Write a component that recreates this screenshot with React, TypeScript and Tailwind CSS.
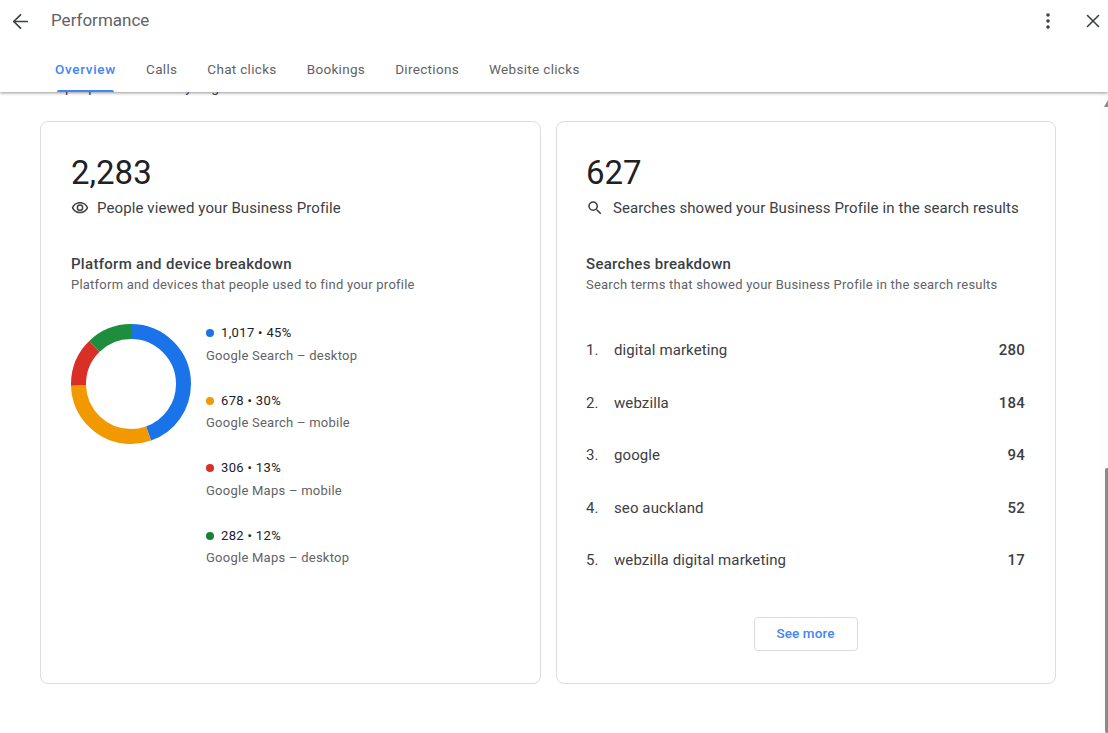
import React from "react";
import { ArrowLeft, X } from "lucide-react";

const tabs = ["Overview", "Calls", "Chat clicks", "Bookings", "Directions", "Website clicks"];

const platforms = [
  { value: "1,017 • 45%", label: "Google Search – desktop", dot: "bg-[#1a73e8]" },
  { value: "678 • 30%", label: "Google Search – mobile", dot: "bg-[#f29900]" },
  { value: "306 • 13%", label: "Google Maps – mobile", dot: "bg-[#d93025]" },
  { value: "282 • 12%", label: "Google Maps – desktop", dot: "bg-[#188038]" },
];

const terms = [
  { term: "digital marketing", count: 280 },
  { term: "webzilla", count: 184 },
  { term: "google", count: 94 },
  { term: "seo auckland", count: 52 },
  { term: "webzilla digital marketing", count: 17 },
];

const segments = [
  { color: "#1a73e8", share: 0.445 },
  { color: "#f29900", share: 0.299 },
  { color: "#d93025", share: 0.132 },
  { color: "#1e8e3e", share: 0.124 },
];

const Donut = () => {
  const radius = 52.5;
  const circumference = 2 * Math.PI * radius;
  let offset = 0;
  return (
    <svg width="120" height="120" viewBox="0 0 120 120" className="shrink-0 -rotate-90">
      {segments.map((s) => {
        const el = (
          <circle
            key={s.color}
            cx="60"
            cy="60"
            r={radius}
            fill="none"
            stroke={s.color}
            strokeWidth="15"
            strokeDasharray={`${s.share * circumference} ${circumference}`}
            strokeDashoffset={-offset * circumference}
          />
        );
        offset += s.share;
        return el;
      })}
    </svg>
  );
};

const EyeIcon = () => (
  <svg width="18" height="18" viewBox="0 0 24 24" fill="#3c4043" className="shrink-0">
    <path d="M12 6a9.77 9.77 0 0 1 8.82 5.5C19.17 14.87 15.79 17 12 17s-7.17-2.13-8.82-5.5A9.77 9.77 0 0 1 12 6m0-2C7 4 2.73 7.11 1 11.5 2.73 15.89 7 19 12 19s9.27-3.11 11-7.5C21.27 7.11 17 4 12 4zm0 5a2.5 2.5 0 1 1 0 5 2.5 2.5 0 0 1 0-5m0-2a4.5 4.5 0 1 0 0 9 4.5 4.5 0 0 0 0-9z" />
  </svg>
);

const SearchIcon = () => (
  <svg width="18" height="18" viewBox="0 0 24 24" fill="#3c4043" className="shrink-0">
    <path d="M15.5 14h-.79l-.28-.27A6.471 6.471 0 0 0 16 9.5 6.5 6.5 0 1 0 9.5 16c1.61 0 3.09-.59 4.23-1.57l.27.28v.79l5 4.99L20.49 19l-4.99-5zm-6 0C7.01 14 5 11.99 5 9.5S7.01 5 9.5 5 14 7.01 14 9.5 11.99 14 9.5 14z" />
  </svg>
);

const MoreIcon = () => (
  <svg width="24" height="24" viewBox="0 0 24 24" fill="#3c4043">
    <circle cx="12" cy="6" r="1.8" />
    <circle cx="12" cy="12" r="1.8" />
    <circle cx="12" cy="18" r="1.8" />
  </svg>
);

export default function App() {
  return (
    <div className="relative flex h-[733px] w-[1108px] flex-col overflow-hidden bg-white font-['Roboto',sans-serif] text-[#202124]">
      {/* Header */}
      <header className="relative z-10 h-[92px] shrink-0 bg-white shadow-[0_1px_3px_rgba(60,64,67,0.55)]">
        <div className="flex h-[42px] items-center pl-[9px] pr-[4px]">
          <ArrowLeft size={23} strokeWidth={1.8} color="#3c4043" />
          <h1 className="ml-[19px] text-[17px] text-[#5f6368]">Performance</h1>
          <div className="ml-auto flex items-center gap-[22px]">
            <MoreIcon />
            <X size={22} strokeWidth={1.7} color="#3c4043" />
          </div>
        </div>
        <nav className="flex h-[50px] gap-[30px] pl-[55px]">
          {tabs.map((t, i) => (
            <div
              key={t}
              className={
                i === 0
                  ? "relative flex items-center pt-[4px] text-[13.5px] font-medium tracking-[0.7px] text-[#4285f4]"
                  : "flex items-center pt-[4px] text-[13.5px] font-normal tracking-[0.32px] text-[#5f6368]"
              }
            >
              {t}
              {i === 0 && <span className="absolute bottom-0 left-[2px] right-[2px] h-[2px] rounded-t bg-[#4285f4]" />}
            </div>
          ))}
        </nav>
      </header>

      {/* Scrolled content */}
      <main className="min-h-0 flex-1 bg-white">
        <div className="h-[3px] overflow-hidden pl-[65px]">
          <p className="-mt-[15px] whitespace-pre text-sm leading-[20px] text-[#3c4043]">people viewed today ring</p>
        </div>
        <div className="mt-[26px] flex gap-[15px] pl-[40px]">
          <section className="h-[563px] w-[501px] rounded-lg border border-[#dadce0] px-[30px] pt-[31px]">
            <div className="text-[33px] font-normal leading-[40px]">2,283</div>
            <div className="mt-[3px] flex h-[24px] items-center gap-[8px] text-[15px] tracking-[0.1px] text-[#3c4043]">
              <EyeIcon />
              People viewed your Business Profile
            </div>
            <h2 className="mt-[33px] text-[15px] font-medium leading-[22px] tracking-[0.3px] text-[#3c4043]">Platform and device breakdown</h2>
            <p className="text-[13px] leading-[20px] tracking-[0.23px] text-[#5f6368]">Platform and devices that people used to find your profile</p>
            <div className="mt-[29px] flex gap-[15px]">
              <Donut />
              <ul className="-mt-[2px] flex flex-col gap-[23px]">
                {platforms.map((p) => (
                  <li key={p.label}>
                    <div className="flex h-[22px] items-center gap-[7px] text-[13px] tracking-[0.35px] text-[#202124]">
                      <span className={`h-[8px] w-[8px] rounded-full ${p.dot}`} />
                      {p.value}
                    </div>
                    <div className="mt-[0.5px] h-[22px] text-[13px] leading-[22px] tracking-[0.25px] text-[#5f6368]">{p.label}</div>
                  </li>
                ))}
              </ul>
            </div>
          </section>

          <section className="flex h-[563px] w-[500px] flex-col rounded-lg border border-[#dadce0] pl-[29px] pr-[30px] pt-[31px]">
            <div className="text-[33px] font-normal leading-[40px]">627</div>
            <div className="mt-[3px] flex h-[24px] items-center gap-[9px] text-[15px] tracking-[0.1px] text-[#3c4043]">
              <SearchIcon />
              Searches showed your Business Profile in the search results
            </div>
            <h2 className="mt-[33px] text-[15px] font-medium leading-[22px] tracking-[0.3px] text-[#3c4043]">Searches breakdown</h2>
            <p className="text-[13px] leading-[20px] tracking-[0.23px] text-[#5f6368]">Search terms that showed your Business Profile in the search results</p>
            <ol className="mt-[29px]">
              {terms.map((t, i) => (
                <li key={t.term} className="flex h-[52.5px] items-center text-[15px] tracking-[0.1px] text-[#3c4043]">
                  <span className="w-[28px]">{i + 1}.</span>
                  <span>{t.term}</span>
                  <span className="ml-auto font-medium tracking-[0.2px] text-[#3c4043]">{t.count}</span>
                </li>
              ))}
            </ol>
            <button className="mx-auto mt-[30px] h-[34px] w-[104px] rounded border border-[#dadce0] text-[13.5px] font-medium tracking-[0.1px] text-[#4285f4]">
              See more
            </button>
          </section>
        </div>
      </main>

      {/* Scrollbar sliver at the window edge */}
      <div className="absolute bottom-0 right-0 top-[92px] w-[8px] bg-[#fdfdfd]">
        <div className="absolute right-0 top-[8px] h-0 w-0 border-b-[7px] border-l-[4px] border-b-[#8a8a8a] border-l-transparent" />
        <div className="absolute bottom-0 right-0 top-[376px] w-[3px] rounded-l-[2px] bg-[#8a8a8a]" />
      </div>
    </div>
  );
}
